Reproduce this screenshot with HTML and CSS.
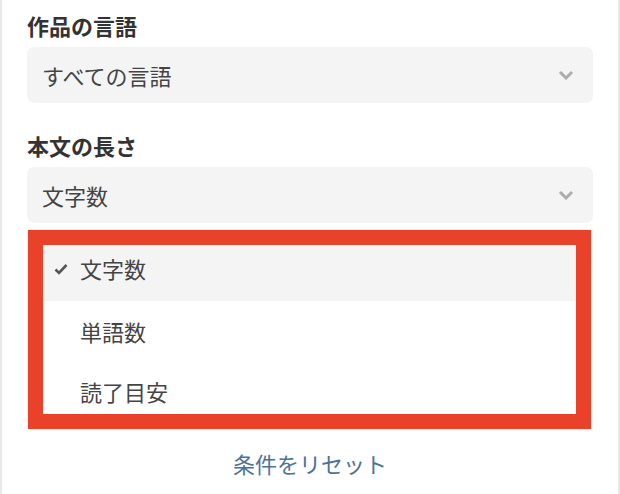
FILE: index.html
```html
<!DOCTYPE html>
<html lang="ja">
<head>
  <meta charset="UTF-8" />
  <meta name="viewport" content="width=device-width, initial-scale=1.0"/>
  <title>検索条件</title>
  <link rel="stylesheet" href="styles.css">
</head>
<body>
  <div class="panel">
    <div class="field">
      <h3 class="field-label">作品の言語</h3>
      <div class="select">
        <span>すべての言語</span>
        <svg class="chevron" width="16" height="10" viewBox="0 0 16 10"><path d="M2 2 L8 8 L14 2" fill="none" stroke="#adadad" stroke-width="3"/></svg>
      </div>
    </div>

    <div class="field">
      <h3 class="field-label">本文の長さ</h3>
      <div class="select">
        <span>文字数</span>
        <svg class="chevron" width="16" height="10" viewBox="0 0 16 10"><path d="M2 2 L8 8 L14 2" fill="none" stroke="#adadad" stroke-width="3"/></svg>
      </div>
      <ul class="dropdown">
        <li class="option selected">
          <svg class="check" width="14" height="12" viewBox="0 0 14 12"><path d="M1.5 6.5 L5 10 L12.5 2" fill="none" stroke="#555" stroke-width="2.6"/></svg>
          <span>文字数</span>
        </li>
        <li class="option"><span>単語数</span></li>
        <li class="option"><span>読了目安</span></li>
      </ul>
    </div>

    <a class="reset" href="#">条件をリセット</a>
  </div>
</body>
</html>
```

FILE: styles.css
```css
body {
  margin: 0;
  background: #e9e9e9;
  font-family: "Noto Sans CJK JP", "Noto Sans", sans-serif;
  color: #444;
}

.panel {
  margin: 0 2px;
  min-height: 100vh;
  background: #fff;
  padding: 10px 25px 0;
  box-sizing: border-box;
}

.field {
  margin-bottom: 27px;
}

.field-label {
  margin: 0 0 7px;
  font-size: 22px;
  line-height: 30px;
  font-weight: bold;
  color: #333;
}

.select {
  height: 56px;
  display: flex;
  align-items: center;
  justify-content: space-between;
  padding: 0 19px 0 15px;
  background: #f4f4f4;
  border-radius: 7px;
  font-size: 22px;
}

.chevron {
  display: block;
}

.dropdown {
  list-style: none;
  height: 169px;
  overflow: hidden;
  margin: 7px 2px 0 1px;
  padding: 0;
  border: 15px solid #e9412a;
  background: #fff;
  box-shadow: 0 0 2px rgba(0, 0, 0, 0.15);
}

.option {
  height: 60px;
  box-sizing: border-box;
  display: flex;
  align-items: center;
  padding-left: 37px;
  font-size: 22px;
  position: relative;
}

.option:first-child {
  margin-top: -4px;
  padding-bottom: 7px;
}

.option.selected {
  background: #f4f4f4;
}

.check {
  position: absolute;
  left: 11px;
  top: 22px;
}

.field:has(.dropdown) {
  margin-bottom: 19px;
}

.reset {
  display: block;
  text-align: center;
  font-size: 22px;
  line-height: 30px;
  color: #4b7397;
  text-decoration: none;
}
```
